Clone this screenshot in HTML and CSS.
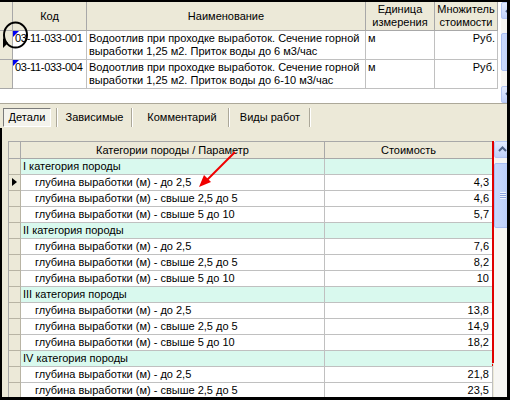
FILE: index.html
```html
<!DOCTYPE html>
<html>
<head>
<meta charset="utf-8">
<link rel="stylesheet" href="styles.css">
</head>
<body>
<div class="screen">
  <div class="top-pane">
    <div class="tgrid">
      <div class="trow thead">
        <div class="tc ind"></div>
        <div class="tc">Код</div>
        <div class="tc">Наименование</div>
        <div class="tc">Единица<br>измерения</div>
        <div class="tc">Множитель<br>стоимости</div>
      </div>
      <div class="trow">
        <div class="tc ind"><span class="tri top-tri"></span></div>
        <div class="tc code"><span class="flag"></span>03-11-033-001</div>
        <div class="tc">Водоотлив при проходке выработок. Сечение горной<br>выработки 1,25 м2. Приток воды до 6 м3/час</div>
        <div class="tc">м</div>
        <div class="tc num">Руб.</div>
      </div>
      <div class="trow">
        <div class="tc ind"></div>
        <div class="tc code"><span class="flag"></span>03-11-033-004</div>
        <div class="tc">Водоотлив при проходке выработок. Сечение горной<br>выработки 1,25 м2. Приток воды до 6-10 м3/час</div>
        <div class="tc">м</div>
        <div class="tc num">Руб.</div>
      </div>
    </div>
    <div class="vscroll top-scroll">
      <div class="sbtn"><svg width="15" height="15" viewBox="0 0 15 15"><path d="M4 9 L7.5 5.5 L11 9" fill="none" stroke="#4D6185" stroke-width="2"/></svg></div>
      <div class="strack"><div class="sthumb"><span class="grip"></span></div></div>
      <div class="sbtn"><svg width="15" height="15" viewBox="0 0 15 15"><path d="M4 6 L7.5 9.5 L11 6" fill="none" stroke="#4D6185" stroke-width="2"/></svg></div>
    </div>
  </div>

  <div class="bottom-pane">
    <div class="tabs">
      <div class="tab active">Детали</div>
      <div class="tab t2">Зависимые</div>
      <div class="tab t3">Комментарий</div>
      <div class="tab t4">Виды работ</div>
    </div>
    <div class="grid-wrap">
      <div class="lgrid">
        <div class="lrow lhead">
          <div class="lc ind"></div>
          <div class="lc">Категории породы / Параметр</div>
          <div class="lc">Стоимость</div>
        </div>
        <div class="lrow cat"><div class="lc ind"></div><div class="lc">I категория породы</div><div class="lc"></div></div>
        <div class="lrow"><div class="lc ind"><span class="tri low-tri"></span></div><div class="lc sub">глубина выработки (м) - до 2,5</div><div class="lc num">4,3</div></div>
        <div class="lrow"><div class="lc ind"></div><div class="lc sub">глубина выработки (м) - свыше 2,5 до 5</div><div class="lc num">4,6</div></div>
        <div class="lrow"><div class="lc ind"></div><div class="lc sub">глубина выработки (м) - свыше 5 до 10</div><div class="lc num">5,7</div></div>
        <div class="lrow cat"><div class="lc ind"></div><div class="lc">II категория породы</div><div class="lc"></div></div>
        <div class="lrow"><div class="lc ind"></div><div class="lc sub">глубина выработки (м) - до 2,5</div><div class="lc num">7,6</div></div>
        <div class="lrow"><div class="lc ind"></div><div class="lc sub">глубина выработки (м) - свыше 2,5 до 5</div><div class="lc num">8,2</div></div>
        <div class="lrow"><div class="lc ind"></div><div class="lc sub">глубина выработки (м) - свыше 5 до 10</div><div class="lc num">10</div></div>
        <div class="lrow cat"><div class="lc ind"></div><div class="lc">III категория породы</div><div class="lc"></div></div>
        <div class="lrow"><div class="lc ind"></div><div class="lc sub">глубина выработки (м) - до 2,5</div><div class="lc num">13,8</div></div>
        <div class="lrow"><div class="lc ind"></div><div class="lc sub">глубина выработки (м) - свыше 2,5 до 5</div><div class="lc num">14,9</div></div>
        <div class="lrow"><div class="lc ind"></div><div class="lc sub">глубина выработки (м) - свыше 5 до 10</div><div class="lc num">18,2</div></div>
        <div class="lrow cat"><div class="lc ind"></div><div class="lc">IV категория породы</div><div class="lc"></div></div>
        <div class="lrow"><div class="lc ind"></div><div class="lc sub">глубина выработки (м) - до 2,5</div><div class="lc num">21,8</div></div>
        <div class="lrow"><div class="lc ind"></div><div class="lc sub">глубина выработки (м) - свыше 2,5 до 5</div><div class="lc num">23,5</div></div>
      </div>
      <div class="vscroll low-scroll">
        <div class="sbtn"><svg width="15" height="15" viewBox="0 0 15 15"><path d="M4 9 L7.5 5.5 L11 9" fill="none" stroke="#4D6185" stroke-width="2"/></svg></div>
        <div class="strack"><div class="sthumb low-thumb"><span class="grip"></span></div></div>
      </div>
    </div>
  </div>

  <svg class="annot" width="507" height="395" viewBox="0 2 507 395">
    <ellipse cx="15.5" cy="35" rx="11.5" ry="12.5" fill="none" stroke="#000" stroke-width="2"/>
    <rect x="492" y="141" width="2" height="222" fill="#E00000"/>
    <rect x="492" y="364" width="1" height="2" fill="#E00000"/>
    <line x1="235" y1="152" x2="206" y2="181" stroke="#F00000" stroke-width="2"/>
    <polygon points="199,187 204,175 211,182" fill="#F00000"/>
  </svg>
</div>
</body>
</html>
```

FILE: styles.css
```css
body {
  margin: 0;
  background: #000;
  font-family: "Liberation Sans", Arial, sans-serif;
  font-size: 11px;
  color: #000;
}

.screen {
  position: relative;
  width: 507px;
  height: 395px;
  margin-top: 2px;
  overflow: hidden;
  background: #ECE9D8;
  display: flex;
  flex-direction: column;
}

/* ---------- top grid ---------- */
.top-pane {
  flex: none;
  height: 101px;
  background: #fff;
  border-bottom: 1px solid #ACA899;
  display: flex;
}

.tgrid {
  width: 498px;
  flex: none;
}

.trow {
  display: grid;
  grid-template-columns: 13px 74px 279px 69px 63px;
  height: 29px;
}

.tc {
  box-sizing: border-box;
  border-right: 1px solid #C0C0C0;
  border-bottom: 1px solid #C0C0C0;
  padding: 1px 2px 0 2px;
  line-height: 13px;
  white-space: nowrap;
  overflow: hidden;
  position: relative;
}

.thead .tc {
  background: #ECE9D8;
  border-color: #A8A8A8;
  display: flex;
  align-items: center;
  justify-content: center;
  text-align: center;
  padding: 0;
}

.tc.ind {
  background: #ECE9D8;
  border-color: #A8A8A8;
  overflow: visible;
}

.tc.code {
  padding-left: 2px;
  letter-spacing: -0.3px;
}

.num {
  text-align: right;
}

.flag {
  position: absolute;
  left: 0;
  top: 0;
  width: 0;
  height: 0;
  border-top: 6px solid #0000F0;
  border-right: 6px solid transparent;
}

.tri {
  position: absolute;
  width: 0;
  height: 0;
  border-left: 5px solid #000;
  border-top: 5px solid transparent;
  border-bottom: 5px solid transparent;
}

.top-tri {
  left: 3px;
  top: 7px;
}

.low-tri {
  left: 3px;
  top: 3px;
  border-top-width: 4.5px;
  border-bottom-width: 4.5px;
}

/* ---------- scrollbars ---------- */
.vscroll {
  flex: none;
  width: 17px;
  display: flex;
  flex-direction: column;
  background: #F7F6F3;
}

.top-scroll {
  margin-left: 3px;
}

.sbtn {
  flex: none;
  height: 17px;
  box-sizing: border-box;
  border: 1px solid #B3C5F3;
  border-radius: 2px;
  background: linear-gradient(#E3EBFE, #C0D1FA);
  display: flex;
  align-items: center;
  justify-content: center;
}

.strack {
  flex: 1;
  position: relative;
}

.sthumb {
  position: absolute;
  left: 0;
  right: 0;
  top: 14px;
  height: 38px;
  box-sizing: border-box;
  border: 1px solid #A9BEF2;
  border-radius: 2px;
  background: linear-gradient(90deg, #C9D8FC, #BACDF9);
  display: flex;
  align-items: center;
  justify-content: center;
}

.low-thumb {
  top: 5px;
  height: 65px;
}

.grip {
  width: 6px;
  height: 7px;
  background: repeating-linear-gradient(#EEF3FE 0 1px, #8CA3E0 1px 2px);
}

/* ---------- bottom pane ---------- */
.bottom-pane {
  flex: 1;
  display: flex;
  flex-direction: column;
  min-height: 0;
}

.tabs {
  flex: none;
  height: 24px;
  box-sizing: border-box;
  padding: 4px 0 0 3px;
  display: flex;
  align-items: flex-start;
}

.tab {
  height: 19px;
  line-height: 19px;
  box-sizing: border-box;
  text-align: center;
  border-right: 1px solid #ACA899;
  box-shadow: 1px 0 0 #fff;
  white-space: nowrap;
}

.tab.active {
  width: 48px;
  line-height: 17px;
  border: 1px solid;
  border-color: #7A7A7A #fff #fff #7A7A7A;
  box-shadow: none;
  background: #F4F3EC;
  margin-right: 5px;
  position: relative;
}

.tab.active::after {
  content: "";
  position: absolute;
  left: 48px;
  top: -1px;
  width: 1px;
  height: 19px;
  background: #ACA899;
  box-shadow: 1px 0 0 #fff;
  margin-left: 4px;
}

.tab.t2 {
  width: 76px;
  padding-left: 2px;
}

.tab.t3 {
  width: 97px;
  padding-left: 4px;
}

.tab.t4 {
  width: 81px;
  padding-left: 2px;
}

.grid-wrap {
  flex: 1;
  min-height: 0;
  border-left: 2px solid #000;
  padding: 13px 0 0 6px;
  display: flex;
  align-items: flex-start;
}

.lgrid {
  flex: none;
  width: 485px;
  box-sizing: border-box;
  border-left: 1px solid #A8A8A8;
  border-top: 1px solid #A8A8A8;
  background: #fff;
}

.lrow {
  display: grid;
  grid-template-columns: 12px 304px 168px;
  height: 16px;
}

.lc {
  box-sizing: border-box;
  border-right: 1px solid #C0C0C0;
  border-bottom: 1px solid #C0C0C0;
  line-height: 15px;
  padding: 0 2px;
  white-space: nowrap;
  overflow: hidden;
  position: relative;
}

.lc.num {
  padding-right: 3px;
}

.lc.sub {
  padding-left: 14px;
}

.lc.ind {
  background: #ECE9D8;
  border-color: #B8B4A4;
  overflow: visible;
}

.lhead {
  height: 17px;
}

.lhead .lc {
  background: #ECE9D8;
  border-color: #A8A8A8;
  line-height: 16px;
  text-align: center;
}

.cat .lc {
  background: #D9F9EE;
}

.cat .lc.ind {
  background: #ECE9D8;
}

.low-scroll {
  margin-left: 1px;
  align-self: stretch;
  margin-top: 0;
}

.annot {
  position: absolute;
  left: 0;
  top: 0;
  pointer-events: none;
}
```
